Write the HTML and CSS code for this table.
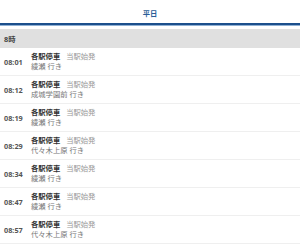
FILE: index.html
```html
<!DOCTYPE html>
<html lang="ja">
<head>
<meta charset="utf-8">
<link rel="stylesheet" href="styles.css">
</head>
<body>
<div class="page">
  <div class="tabs"><div class="tab">平日</div></div>
  <div class="hour">8時</div>
  <ul class="list">
    <li class="row"><span class="time">08:01</span><div class="info"><div class="l1"><b>各駅停車</b><span class="orig">当駅始発</span></div><div class="l2">綾瀬 行き</div></div></li>
    <li class="row"><span class="time">08:12</span><div class="info"><div class="l1"><b>各駅停車</b><span class="orig">当駅始発</span></div><div class="l2">成城学園前 行き</div></div></li>
    <li class="row"><span class="time">08:19</span><div class="info"><div class="l1"><b>各駅停車</b><span class="orig">当駅始発</span></div><div class="l2">綾瀬 行き</div></div></li>
    <li class="row"><span class="time">08:29</span><div class="info"><div class="l1"><b>各駅停車</b><span class="orig">当駅始発</span></div><div class="l2">代々木上原 行き</div></div></li>
    <li class="row"><span class="time">08:34</span><div class="info"><div class="l1"><b>各駅停車</b><span class="orig">当駅始発</span></div><div class="l2">綾瀬 行き</div></div></li>
    <li class="row"><span class="time">08:47</span><div class="info"><div class="l1"><b>各駅停車</b><span class="orig">当駅始発</span></div><div class="l2">綾瀬 行き</div></div></li>
    <li class="row"><span class="time">08:57</span><div class="info"><div class="l1"><b>各駅停車</b><span class="orig">当駅始発</span></div><div class="l2">代々木上原 行き</div></div></li>
  </ul>
</div>
</body>
</html>
```
FILE: styles.css
```css
* { box-sizing: border-box; }
html, body { margin: 0; padding: 0; background: #fff; }
body {
  font-family: "Noto Sans", "Noto Sans CJK JP", sans-serif;
  font-size: 7.3px;
  color: #333;
  width: 300px;
  height: 244px;
  overflow: hidden;
}
.tabs {
  height: 25px;
  border-bottom: 2px solid #1c4f8c;
  box-shadow: 0 1px 0 #8fb0d4;
  display: flex;
  justify-content: center;
  align-items: center;
  padding-top: 3px;
}
.tab {
  font-weight: bold;
  color: #2b5d97;
  line-height: 10px;
}
.hour {
  margin-top: 4px;
  height: 19px;
  background: #e0e0e0;
  font-weight: bold;
  color: #444;
  padding-left: 4px;
  display: flex;
  align-items: center;
  line-height: 10px;
}
.list { list-style: none; margin: 0; padding: 0; }
.row {
  height: 28px;
  display: flex;
  align-items: center;
  border-bottom: 1px solid #efefef;
  padding-left: 4px;
}
.time {
  width: 27px;
  font-weight: bold;
  color: #555;
  line-height: 10px;
}
.info { line-height: 10px; padding-bottom: 1px; }
.l1 b { color: #333; font-weight: bold; }
.orig { color: #999; margin-left: 6px; }
.l2 { color: #777; }
```
